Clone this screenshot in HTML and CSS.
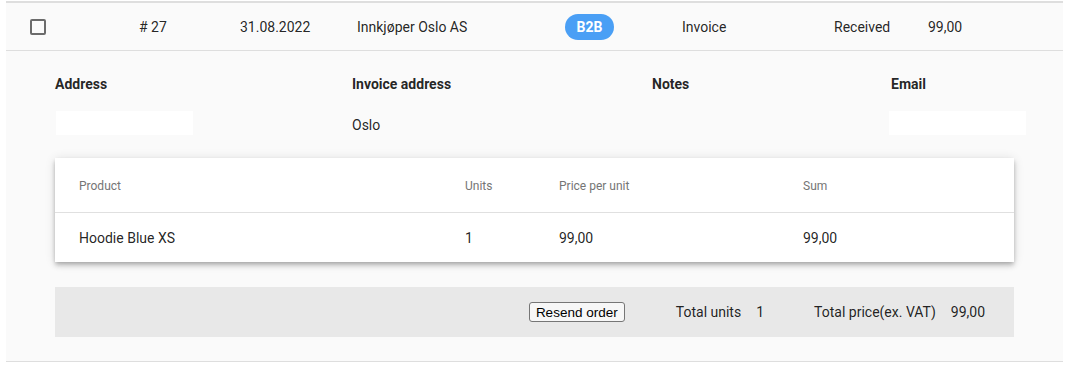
FILE: index.html
```html
<!DOCTYPE html>
<html>

<head>
    <meta charset="utf-8" />
    <title>Order #27</title>
    <link rel="stylesheet" href="styles.css">
</head>

<body>
    <div class="order">
        <div class="order-row">
            <div class="cell"><span class="checkbox"></span></div>
            <div class="cell"># 27</div>
            <div class="cell">31.08.2022</div>
            <div class="cell">Innkjøper Oslo AS</div>
            <div class="cell"><span class="badge">B2B</span></div>
            <div class="cell">Invoice</div>
            <div class="cell">Received</div>
            <div class="cell">99,00</div>
        </div>
        <div class="order-details">
            <div class="info">
                <div class="label">Address</div>
                <div class="label">Invoice address</div>
                <div class="label">Notes</div>
                <div class="label">Email</div>

                <div class="value"><span class="field"></span></div>
                <div class="value">Oslo</div>
                <div class="value"></div>
                <div class="value"><span class="field email"></span></div>
            </div>

            <div class="lines">
                <div class="line head">
                    <div>Product</div>
                    <div>Units</div>
                    <div>Price per unit</div>
                    <div>Sum</div>
                </div>
                <div class="line">
                    <div>Hoodie Blue XS</div>
                    <div>1</div>
                    <div>99,00</div>
                    <div>99,00</div>
                </div>
            </div>

            <div class="totals">
                <button class="resend">Resend order</button>
                <span class="total-label units-label">Total units</span>
                <span class="total-value">1</span>
                <span class="total-label price-label">Total price(ex. VAT)</span>
                <span class="total-value">99,00</span>
            </div>
        </div>
    </div>
</body>

</html>
```

FILE: styles.css
```css
:root {
    --text-color: rgba(0, 0, 0, 0.87);
    --muted-color: #757575;
    --line-color: #dedede;
    --row-background: #fafafa;
    --badge-color: #4a9ff5;
    --totals-background: #e8e8e8;
}

* {
    box-sizing: border-box;
}

html {
    font-family: Roboto, "Noto Sans", sans-serif;
    color: var(--text-color);
}

body {
    margin: 0;
    background-color: white;
}

.order {
    margin: 1px 0 0 6px;
    width: 1057px;
    background-color: var(--row-background);
    border-top: 2px solid var(--line-color);
    border-bottom: 1px solid var(--line-color);
}

.order-row {
    display: grid;
    grid-template-columns: 109px 101px 117px 208px 117px 152px 94px 1fr;
    align-items: center;
    height: 48px;
    padding-left: 24px;
    border-bottom: 1px solid var(--line-color);
    font-size: 14px;
}

.order-row>.cell {
    display: flex;
    align-items: center;
}

.checkbox {
    display: block;
    width: 16px;
    height: 16px;
    margin-top: 1px;
    border: 2px solid #6b6b6b;
    border-radius: 2px;
}

.badge {
    display: inline-flex;
    align-items: center;
    justify-content: center;
    width: 49px;
    height: 26px;
    margin-top: 1px;
    border-radius: 13px;
    background-color: var(--badge-color);
    color: white;
    font-weight: bold;
    font-size: 14px;
}

.order-details {
    padding: 25px 49px 24px;
}

.info {
    display: grid;
    grid-template-columns: 297px 300px 239px 1fr;
    grid-template-rows: 16px 24px;
    row-gap: 19px;
    font-size: 14px;
}

.info>.label {
    font-weight: bold;
    line-height: 16px;
}

.info>.value {
    display: flex;
    align-items: center;
    padding-top: 4px;
}

.field {
    display: block;
    width: 137px;
    height: 24px;
    margin-top: -4px;
    margin-left: 1px;
    background-color: white;
}

.field.email {
    margin-left: -2px;
}

.lines {
    margin-top: 23px;
    background-color: white;
    box-shadow: 0 2px 4px -1px rgba(0, 0, 0, 0.2), 0 4px 5px 0 rgba(0, 0, 0, 0.14), 0 1px 10px 0 rgba(0, 0, 0, 0.12);
}

.line {
    display: grid;
    grid-template-columns: 386px 94px 244px 1fr;
    align-items: center;
    height: 49px;
    padding-left: 24px;
    font-size: 14px;
}

.line.head {
    height: 55px;
    padding-top: 2px;
    border-bottom: 1px solid #e0e0e0;
    color: var(--muted-color);
    font-size: 12px;
}

.totals {
    display: flex;
    align-items: center;
    justify-content: flex-end;
    height: 50px;
    margin-top: 25px;
    padding-right: 29px;
    background-color: var(--totals-background);
    font-size: 14px;
}

.resend {
    height: 20px;
    width: 96px;
    padding: 0;
    border: 1px solid #767676;
    border-radius: 3px;
    background-color: #f7f7f7;
    color: black;
    font-family: "Liberation Sans", Arial, sans-serif;
    font-size: 13.5px;
}

.units-label {
    margin-left: 51px;
}

.price-label {
    margin-left: 50px;
}

.total-value {
    margin-left: 15px;
}
```
